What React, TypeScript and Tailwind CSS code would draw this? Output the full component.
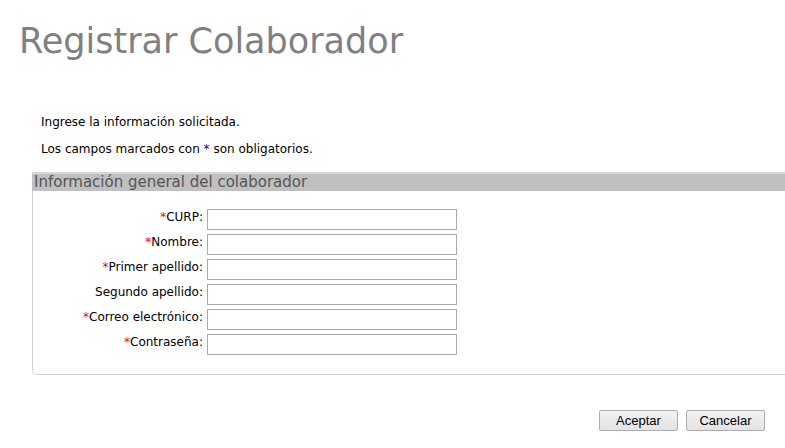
const fields = [
  { label: 'CURP', required: true, type: 'text' },
  { label: 'Nombre', required: true, type: 'text' },
  { label: 'Primer apellido', required: true, type: 'text' },
  { label: 'Segundo apellido', required: false, type: 'text' },
  { label: 'Correo electrónico', required: true, type: 'email' },
  { label: 'Contraseña', required: true, type: 'password' },
];

const ui = { fontFamily: '"DejaVu Sans", Tahoma, sans-serif' };

export default function App() {
  return (
    <div className="w-[785px] h-[448px] overflow-hidden bg-white" style={ui}>
      <h1 className="pl-[19px] pt-[19px] text-[35px] leading-[44px] font-normal text-[#808080]">
        Registrar Colaborador
      </h1>

      <div className="pl-[41px] pt-[52px] text-[12px] leading-[15px] text-black">
        <p>Ingrese la información solicitada.</p>
        <p className="mt-[12px]">
          Los campos marcados con <span className="text-[#00007a]">*</span> son obligatorios.
        </p>
      </div>

      <div className="ml-[32px] mt-[15px] w-[820px] border-x border-b border-[#d3d3d3] rounded-b-[5px]">
        <div className="h-[19px] -mx-px bg-[#c0c0c0] border-t-2 border-[#d6d6d6] pl-[2px] text-[15px] leading-[16px] text-[#555]">
          Información general del colaborador
        </div>

        <div className="grid grid-cols-[174px_250px] auto-rows-[21px] gap-y-[4px] pt-[18px] pb-[19px] text-[12px] leading-[15px] text-black">
          {fields.map((f) => (
            <div key={f.label} className="contents">
              <label className="flex items-center justify-end pr-[4px] pb-[4px]">
                {f.required && <span className="text-[#ff0000]">*</span>}
                {f.label}:
              </label>
              <input
                type={f.type}
                className="h-[21px] w-[250px] border border-[#a9a9a9] bg-white px-1 text-[12px] outline-none"
              />
            </div>
          ))}
        </div>
      </div>

      <div className="flex justify-end gap-[8px] pr-[20px] mt-[35px]" style={{ fontFamily: '"Liberation Sans", Arial, sans-serif' }}>
        <button className="w-[79px] h-[21px] rounded-[2px] border border-[#adadad] bg-[linear-gradient(#f2f2f2,#e3e3e3)] text-[13px] text-black">
          Aceptar
        </button>
        <button className="w-[79px] h-[21px] rounded-[2px] border border-[#adadad] bg-[linear-gradient(#f2f2f2,#e3e3e3)] text-[13px] text-black">
          Cancelar
        </button>
      </div>
    </div>
  );
}
